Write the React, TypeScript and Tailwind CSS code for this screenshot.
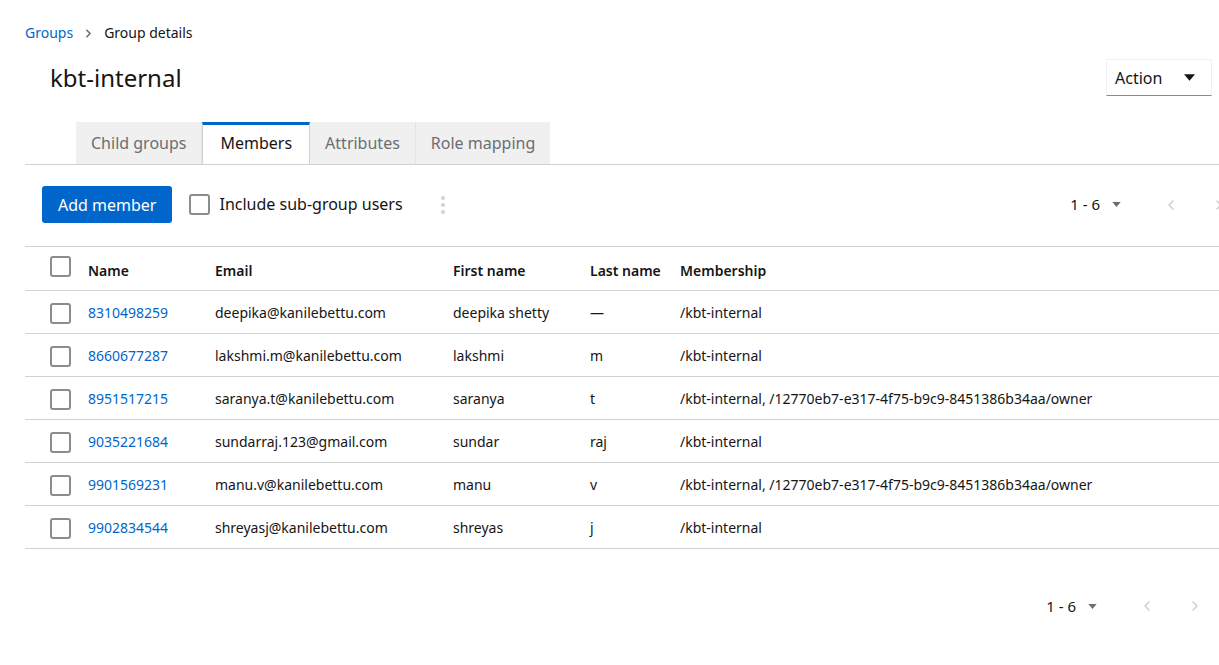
import { ChevronRight, ChevronLeft } from "lucide-react";

interface Member {
  name: string;
  email: string;
  firstName: string;
  lastName: string;
  membership: string;
}

const MEMBERS: Member[] = [
  { name: "8310498259", email: "deepika@kanilebettu.com", firstName: "deepika shetty", lastName: "—", membership: "/kbt-internal" },
  { name: "8660677287", email: "lakshmi.m@kanilebettu.com", firstName: "lakshmi", lastName: "m", membership: "/kbt-internal" },
  { name: "8951517215", email: "saranya.t@kanilebettu.com", firstName: "saranya", lastName: "t", membership: "/kbt-internal, /12770eb7-e317-4f75-b9c9-8451386b34aa/owner" },
  { name: "9035221684", email: "sundarraj.123@gmail.com", firstName: "sundar", lastName: "raj", membership: "/kbt-internal" },
  { name: "9901569231", email: "manu.v@kanilebettu.com", firstName: "manu", lastName: "v", membership: "/kbt-internal, /12770eb7-e317-4f75-b9c9-8451386b34aa/owner" },
  { name: "9902834544", email: "shreyasj@kanilebettu.com", firstName: "shreyas", lastName: "j", membership: "/kbt-internal" },
];

const TABS = ["Child groups", "Members", "Attributes", "Role mapping"];

const ROW_GRID = "grid grid-cols-[63px_127px_238px_137px_90px_1fr] items-center";

function Checkbox() {
  return <span className="block w-[21px] h-[21px] rounded-[3px] border-2 border-[#8a8d90] bg-white" />;
}

function Caret({ className = "" }: { className?: string }) {
  return (
    <svg viewBox="0 0 10 6" className={className} fill="currentColor">
      <path d="M0 0h10L5 6z" />
    </svg>
  );
}

function Pagination({ className = "" }: { className?: string }) {
  return (
    <div className={`flex items-center text-[15px] text-[#151515] ${className}`}>
      <span>1 - 6</span>
      <Caret className="w-[9px] h-[5px] ml-[12px] text-[#6a6e73]" />
      <ChevronLeft className="w-[16px] h-[16px] ml-[42px] text-[#d2d2d2]" strokeWidth={2.5} />
      <ChevronRight className="w-[16px] h-[16px] ml-[32px] text-[#d2d2d2]" strokeWidth={2.5} />
    </div>
  );
}

export default function App() {
  return (
    <div className="w-[1219px] h-[665px] overflow-hidden bg-white text-[#151515] font-['Noto_Sans',sans-serif]">
      {/* Breadcrumb */}
      <nav className="flex items-center pl-[25px] pt-[23px] text-[14px] leading-[20px]">
        <span className="text-[#0066cc]">Groups</span>
        <ChevronRight className="w-[13px] h-[13px] mx-[9px] text-[#6a6e73]" strokeWidth={3} />
        <span>Group details</span>
      </nav>

      {/* Title + action */}
      <div className="flex items-center justify-between pl-[50px] pr-[7px] mt-[16px]">
        <h1 className="text-[24px] leading-[37px]">kbt-internal</h1>
        <button className="flex items-center h-[37px] w-[106px] pl-[8px] pr-[16px] justify-between border border-[#f0f0f0] border-b-[#8a8d90] text-[16px]">
          Action
          <Caret className="w-[11px] h-[7px] text-[#151515]" />
        </button>
      </div>

      {/* Tabs */}
      <div className="ml-[25px] mt-[26px] border-b border-[#d2d2d2] pl-[51px] flex">
        {TABS.map((tab) => {
          const active = tab === "Members";
          return (
            <div
              key={tab}
              className={
                active
                  ? "h-[42px] px-[17px] flex items-center bg-white border-t-[3px] border-t-[#0066cc] border-x border-x-[#d2d2d2] -mb-px text-[16px] text-[#151515] pb-[3px]"
                  : "h-[42px] px-[15px] flex items-center bg-[#f0f0f0] border-r border-r-[#e4e4e4] last:border-r-0 text-[16px] text-[#6a6e73]"
              }
            >
              {tab}
            </div>
          );
        })}
      </div>

      {/* Toolbar */}
      <div className="flex items-center w-[1243px] pl-[42px] pr-[16px] mt-[21px]">
        <button className="h-[37px] px-[16px] rounded-[3px] bg-[#0066cc] text-white text-[16px]">Add member</button>
        <div className="flex items-center ml-[17px]">
          <Checkbox />
          <span className="ml-[9px] text-[16px] -mt-[1px]">Include sub-group users</span>
        </div>
        <div className="flex flex-col gap-[3px] ml-[38px]">
          <span className="w-[4px] h-[4px] rounded-full bg-[#d2d2d2]" />
          <span className="w-[4px] h-[4px] rounded-full bg-[#d2d2d2]" />
          <span className="w-[4px] h-[4px] rounded-full bg-[#d2d2d2]" />
        </div>
        <Pagination className="ml-auto" />
      </div>

      {/* Table */}
      <div className="ml-[25px] mt-[23px] border-t border-[#d2d2d2] text-[14px]">
        <div className={`${ROW_GRID} h-[44px] border-b border-[#d2d2d2] font-semibold`}>
          <div className="pl-[25px] -mt-[4px]"><Checkbox /></div>
          <div className="mt-[3px]">Name</div>
          <div className="mt-[3px]">Email</div>
          <div className="mt-[3px]">First name</div>
          <div className="mt-[3px]">Last name</div>
          <div className="mt-[3px]">Membership</div>
        </div>
        {MEMBERS.map((m) => (
          <div key={m.name} className={`${ROW_GRID} h-[43px] border-b border-[#d2d2d2]`}>
            <div className="pl-[25px] mt-[2px]"><Checkbox /></div>
            <div className="text-[#0066cc]">{m.name}</div>
            <div>{m.email}</div>
            <div>{m.firstName}</div>
            <div>{m.lastName}</div>
            <div className="whitespace-nowrap">{m.membership}</div>
          </div>
        ))}
      </div>

      {/* Bottom pagination */}
      <div className="flex justify-end pr-[16px] mt-[46px]">
        <Pagination />
      </div>
    </div>
  );
}
